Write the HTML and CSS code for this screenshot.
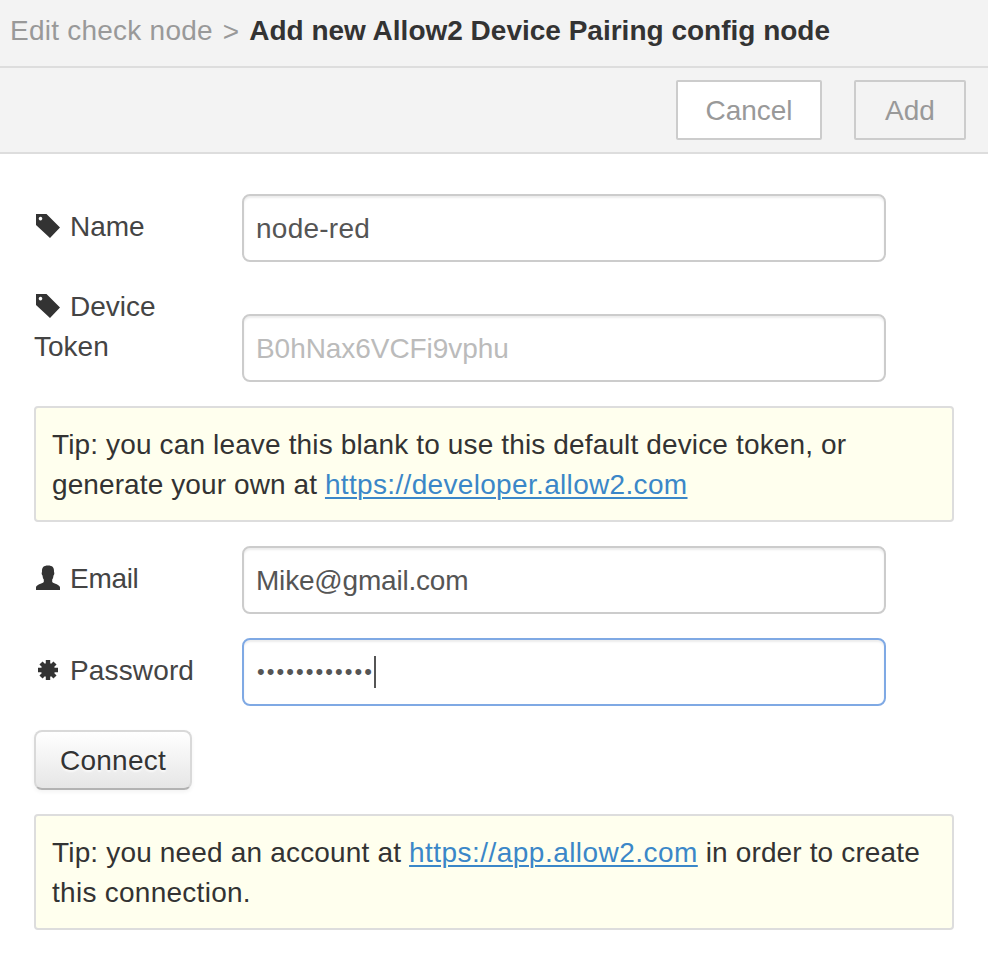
FILE: index.html
```
<!DOCTYPE html>
<html lang="en">
<head>
<meta charset="utf-8">
<title>Add new Allow2 Device Pairing config node</title>
<link rel="stylesheet" href="styles.css">
</head>
<body>
<svg class="defs" width="0" height="0" aria-hidden="true">
  <symbol id="tag" viewBox="0 0 28 28"><path fill-rule="evenodd" d="M2 2H12.500L26 15.500L16 26L2 13ZM6.500 4.800a1.800 1.800 0 1 0 .01 0Z"/></symbol>
  <symbol id="user" viewBox="0 0 28 28"><path d="M14 1.500C18.500 1.500 20.300 3.500 20 8C20.600 8.500 20.400 11 19.500 11.500C19.200 13.500 19 14.600 18.200 15.500V18C20 19.800 26 20.500 26 23.500V26H2V23.500C2 20.500 8 19.800 9.800 18V15.500C9 14.600 8.800 13.500 8.500 11.500C7.600 11 7.400 8.500 8 8C7.700 3.500 9.500 1.500 14 1.500Z"/></symbol>
  <symbol id="asterisk" viewBox="0 0 28 28"><circle cx="14" cy="14" r="7"/><path stroke-width="4.400" d="M14 4V24M4 14H24M7 7L21 21M21 7L7 21"/></symbol>
</svg>
<header class="title"><span class="crumb">Edit check node</span><span class="sep">&gt;</span><strong class="current">Add new Allow2 Device Pairing config node</strong></header>
<div class="toolbar">
  <button class="action cancel">Cancel</button>
  <button class="action add">Add</button>
</div>
<main class="form">
  <div class="row">
    <label class="label" for="name"><svg class="icon"><use href="#tag"/></svg><span>Name</span></label>
    <input class="field field-name" id="name" value="node-red">
  </div>
  <div class="row row-token">
    <label class="label" for="token"><svg class="icon"><use href="#tag"/></svg><span>Device</span> <span>Token</span></label>
    <input class="field field-token" id="token" placeholder="B0hNax6VCFi9vphu">
  </div>
  <div class="tip"><span class="tip-text">Tip: you can leave this blank to use this default device token, or</span><br><span class="tip-gen">generate your own at </span><a class="link-dev" href="#">https://developer.allow2.com</a></div>
  <div class="row">
    <label class="label label-email" for="email"><svg class="icon"><use href="#user"/></svg><span>Email</span></label>
    <input class="field field-email" id="email" value="Mike@gmail.com">
  </div>
  <div class="row">
    <span class="label label-password"><svg class="icon"><use href="#asterisk"/></svg><span>Password</span></span>
    <div class="field field-password"><span class="dots">••••••••••••</span><i class="caret"></i></div>
  </div>
  <button class="connect">Connect</button>
  <div class="tip"><span class="tip-lead">Tip: you need an account at </span><a class="link-app" href="#">https://app.allow2.com</a><span class="tip-text"> in order to create</span><br><span class="tip-end">this connection.</span></div>
</main>
</body>
</html>
```
FILE: styles.css
```
* { box-sizing: border-box; }
body {
  margin: 0;
  height: 968px;
  background: #fff;
  color: #333;
  font: 28px/40px "Liberation Sans", Arial, sans-serif;
}
button, input { font: inherit; letter-spacing: inherit; margin: 0; }
.defs { position: absolute; }
.title {
  display: flex;
  height: 68px;
  padding: 11px 0 0 10px;
  background: #f3f3f3;
  border-bottom: 2px solid #ddd;
  white-space: pre;
}
.crumb, .sep { color: #999; }
.crumb { letter-spacing: .24px; }
.sep { margin: 1px 10px 0; }
.toolbar {
  display: flex;
  justify-content: flex-end;
  gap: 32px;
  height: 86px;
  padding: 12px 22px 0 0;
  background: #f3f3f3;
  border-bottom: 2px solid #ddd;
}
.action {
  height: 60px;
  padding: 2px 0 0;
  border: 2px solid #ccc;
  border-radius: 2px;
  color: #999;
}
.cancel { width: 146px; background: #fff; }
.add { width: 112px; background: #f3f3f3; }
.form { padding: 40px 34px 0; }
.row { display: flex; gap: 8px; margin-bottom: 24px; }
.label { width: 200px; padding-top: 13px; color: #444; }
.label-email { letter-spacing: -.3px; }
.label-password { letter-spacing: .14px; }
.icon {
  width: 28px;
  height: 28px;
  margin-right: 8px;
  vertical-align: -4px;
  fill: #333;
  stroke: #333;
  stroke-width: 0;
}
.row-token { align-items: flex-end; height: 96px; }
.row-token .label { width: 160px; margin: 0 40px 15px 0; padding: 0; }
.field {
  width: 644px;
  height: 68px;
  padding: 2px 12px 0;
  border: 2px solid #ccc;
  border-radius: 8px;
  background: #fff;
  box-shadow: inset 0 2px 2px rgba(0, 0, 0, .075);
  color: #555;
  outline: 0;
}
.field::placeholder { color: #bbb; opacity: 1; }
.field-name { letter-spacing: .25px; }
.field-token { letter-spacing: -.06px; }
.field-email { letter-spacing: -.2px; }
.field-password { display: flex; align-items: center; padding-top: 0; border-color: #7fa9e4; }
.dots { width: 118px; padding-left: 1px; font-size: 22px; letter-spacing: 2.05px; white-space: nowrap; }
.caret { width: 2px; height: 32px; background: #555; }
.tip {
  height: 116px;
  margin-bottom: 24px;
  padding: 17px 16px 0;
  border: 2px solid #ddd;
  border-radius: 4px;
  background: #ffffee;
  white-space: pre;
}
.tip a { color: #3b87c8; text-decoration-thickness: 2px; text-underline-offset: 3px; }
.tip-text { letter-spacing: .14px; }
.tip-gen { letter-spacing: .1px; }
.tip-lead { letter-spacing: .17px; }
.tip-end { letter-spacing: .27px; }
.link-dev { letter-spacing: .33px; }
.link-app { letter-spacing: .46px; }
.connect {
  display: block;
  width: 158px;
  height: 60px;
  margin-bottom: 24px;
  padding: 2px 0 0;
  border: 2px solid #d9d9d9;
  border-bottom-color: #b3b3b3;
  border-radius: 8px;
  background: linear-gradient(#fff, #e6e6e6);
  box-shadow: 0 2px 4px rgba(0, 0, 0, .05);
  color: #333;
  letter-spacing: .25px;
  text-shadow: 0 2px 2px rgba(255, 255, 255, .75);
}
```
